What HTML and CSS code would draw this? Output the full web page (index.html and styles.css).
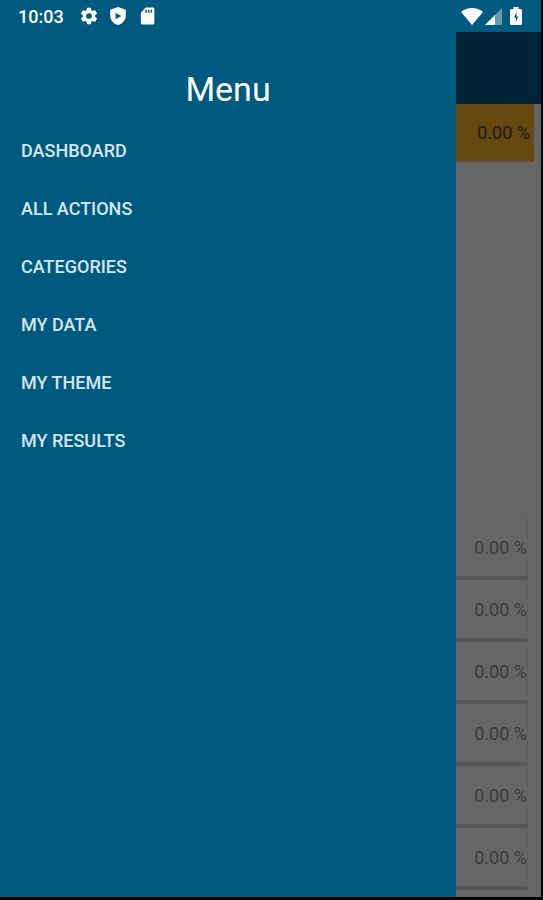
FILE: index.html
```html
<!doctype html>
<html lang="en">
<head>
    <meta charset="UTF-8" />
    <meta name="viewport" content="width=device-width, initial-scale=1.0" />
    <title>Menu</title>
    <link rel="stylesheet" href="styles.css">
</head>
<body>

    <header class="status-bar">
        <span class="clock">10:03</span>
        <svg class="icon" viewBox="1 1 22 22" aria-hidden="true">
            <path d="M19.4 13a7.500 7.500 0 0 0 0-2l2.200-1.700a.5.5 0 0 0 .1-.6l-2-3.500a.5.5 0 0 0-.6-.2l-2.500 1a7.300 7.300 0 0 0-1.700-1L14.500 2.400a.5.5 0 0 0-.5-.4h-4a.5.5 0 0 0-.5.4L9.100 5a7.700 7.700 0 0 0-1.700 1l-2.500-1a.5.5 0 0 0-.6.200l-2 3.500a.5.5 0 0 0 .1.600L4.600 11a8 8 0 0 0 0 2l-2.200 1.700a.5.5 0 0 0-.1.600l2 3.500c.1.200.4.300.6.200l2.500-1a7.300 7.300 0 0 0 1.700 1l.4 2.600c0 .2.200.4.500.4h4c.2 0 .5-.2.500-.4l.4-2.600a7.700 7.700 0 0 0 1.700-1l2.500 1c.2.100.5 0 .6-.2l2-3.500a.5.500 0 0 0-.1-.6zM12 15.500a3.500 3.500 0 1 1 0-7 3.500 3.500 0 0 1 0 7z" fill-rule="evenodd" />
        </svg>
        <svg class="icon" viewBox="1 1 22 22" aria-hidden="true">
            <path d="M12 1L2.500 4.500V11c0 6 4 10.500 9.500 12 5.500-1.500 9.500-6 9.500-12V4.500zM9 8l7 4-7 4z" fill-rule="evenodd" />
        </svg>
        <svg class="icon" viewBox="1 1 22 22" aria-hidden="true">
            <path d="M19 1.500H10.500L4.500 8v12.500a2 2 0 0 0 2 2H19a2 2 0 0 0 2-2v-17a2 2 0 0 0-2-2zM10 4.500h1.800v3.500H10zM13.200 4.500H15v3.500h-1.800zM16.400 4.500h1.800v3.500h-1.800z" fill-rule="evenodd" />
        </svg>
        <div class="signals">
            <svg class="wifi" viewBox="0 0 22 17" aria-hidden="true">
                <path d="M11 17L0 4C3 1.500 7 0 11 0s8 1.500 11 4z" />
            </svg>
            <svg class="cell" viewBox="0 0 17 17" aria-hidden="true">
                <path d="M17 0v17H0z" opacity=".4" />
                <path d="M10 7v10H0z" />
            </svg>
            <svg class="battery" viewBox="0 0 12 18" aria-hidden="true">
                <path d="M3.500 0h5v2h2A1.500 1.500 0 0 1 12 3.500v13a1.500 1.500 0 0 1-1.500 1.500h-9A1.500 1.500 0 0 1 0 16.500v-13A1.500 1.500 0 0 1 1.500 2h2zM6.500 5L4 10.500h1.800V15L8.300 9.500H6.500z" fill-rule="evenodd" />
            </svg>
        </div>
    </header>

    <div class="screen">
        <nav class="drawer">
            <h1 class="title">Menu</h1>
            <a href="#dashboard">DASHBOARD</a>
            <a href="#actions">ALL ACTIONS</a>
            <a href="#categories">CATEGORIES</a>
            <a href="#data">MY DATA</a>
            <a href="#theme">MY THEME</a>
            <a href="#results">MY RESULTS</a>
        </nav>

        <main class="page">
            <div class="toolbar"></div>
            <div class="total">0.00 %</div>
            <div class="chart"></div>
            <ul class="results">
                <li>0.00 %</li>
                <li>0.00 %</li>
                <li>0.00 %</li>
                <li>0.00 %</li>
                <li>0.00 %</li>
                <li>0.00 %</li>
            </ul>
        </main>
    </div>

</body>
</html>
```

FILE: styles.css
```css
* {
    box-sizing: border-box;
}
body {
    font-family: Roboto, sans-serif;
    margin: 0;
    min-height: 100vh;
    display: flex;
    flex-direction: column;
    background: #005a7f;
    border-right: 2px solid #000;
    border-bottom: 3px solid #000;
    color: white;
}
.status-bar {
    display: flex;
    align-items: center;
    gap: 11px;
    height: 32px;
    padding: 0 19px 0 18px;
}
.clock {
    font-size: 18px;
    font-weight: 500;
    margin-right: 5px;
}
svg {
    display: block;
    fill: white;
}
.icon {
    width: 18px;
    height: 18px;
}
.signals {
    display: flex;
    align-items: center;
    gap: 2px;
    margin-left: auto;
}
.wifi {
    width: 22px;
    height: 17px;
}
.cell {
    width: 17px;
    height: 17px;
}
.battery {
    width: 12px;
    height: 18px;
    margin-left: 6px;
}
.screen {
    flex: 1;
    display: flex;
}
.drawer {
    width: 84.3%;
    padding-top: 36px;
}
.title {
    margin: 0 0 23px;
    font-size: 34px;
    font-weight: 400;
    line-height: 42px;
    text-align: center;
}
.drawer a {
    display: block;
    height: 58px;
    padding-left: 21px;
    line-height: 36px;
    font-size: 18px;
    font-weight: 500;
    color: #d6e6ef;
    text-decoration: none;
}
/* the page is dimmed while the drawer is open */
.page {
    flex: 1;
    display: flex;
    flex-direction: column;
    background: #666;
    color: #3c3c3c;
    font-size: 18px;
    text-align: right;
}
.toolbar {
    height: 72px;
    background: #002435;
}
.total {
    height: 58px;
    margin-right: 7px;
    padding-right: 4px;
    line-height: 58px;
    background: #664811;
    border-bottom: 1px solid #5c5040;
    color: #1c1608;
}
.chart {
    flex: 1;
}
.results {
    list-style: none;
    margin: 0 13px 7px 0;
    padding: 0;
}
.results li {
    height: 62px;
    line-height: 60px;
    border-right: 1px solid #606060;
    border-bottom: 4px solid #565656;
}
```
